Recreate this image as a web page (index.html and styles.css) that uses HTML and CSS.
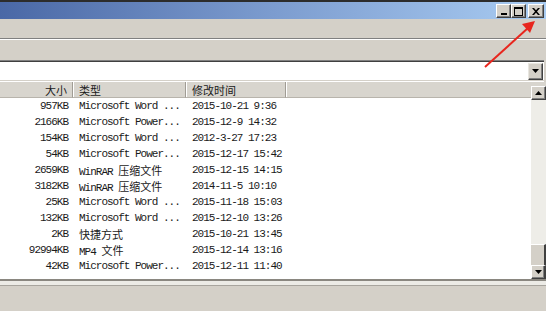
FILE: index.html
```html
<!DOCTYPE html>
<html>
<head>
<meta charset="utf-8">
<link rel="stylesheet" href="styles.css">
</head>
<body>
<div class="window">
  <div class="titlebar">
    <div class="tbtn min"><svg width="8" height="8" viewBox="0 0 8 8"><rect x="1" y="6" width="6" height="2" fill="#000"/></svg></div>
    <div class="tbtn max"><svg width="9" height="9" viewBox="0 0 9 9"><rect x="0.5" y="0.5" width="8" height="8" fill="none" stroke="#000"/><rect x="0" y="0" width="9" height="2" fill="#000"/></svg></div>
    <div class="tbtn close"><svg width="8" height="7" viewBox="0 0 8 7"><path d="M0 0h2l2 2.2 2-2.2h2l-3 3.5 3 3.5h-2l-2-2.2-2 2.2h-2l3-3.5z" fill="#000"/></svg></div>
  </div>
  <div class="menubar"></div>
  <div class="toolbar"></div>
  <div class="address">
    <div class="field">
      <div class="dropbtn"><svg width="7" height="4" viewBox="0 0 7 4"><path d="M0 0h7l-3.5 4z" fill="#000"/></svg></div>
    </div>
  </div>
  <div class="listview">
    <div class="list">
      <div class="row header">
        <div class="c size hc"><span class="cjk">大小</span></div>
        <div class="c type hc"><span class="cjk">类型</span></div>
        <div class="c date hc"><span class="cjk">修改时间</span></div>
        <div class="c rest hc"></div>
      </div>
      <div class="row"><div class="c size">957KB</div><div class="c type">Microsoft Word ...</div><div class="c date">2015-10-21 9:36</div></div>
      <div class="row"><div class="c size">2166KB</div><div class="c type">Microsoft Power...</div><div class="c date">2015-12-9 14:32</div></div>
      <div class="row"><div class="c size">154KB</div><div class="c type">Microsoft Word ...</div><div class="c date">2012-3-27 17:23</div></div>
      <div class="row"><div class="c size">54KB</div><div class="c type">Microsoft Power...</div><div class="c date">2015-12-17 15:42</div></div>
      <div class="row"><div class="c size">2659KB</div><div class="c type">WinRAR <span class="cjk">压缩文件</span></div><div class="c date">2015-12-15 14:15</div></div>
      <div class="row"><div class="c size">3182KB</div><div class="c type">WinRAR <span class="cjk">压缩文件</span></div><div class="c date">2014-11-5 10:10</div></div>
      <div class="row"><div class="c size">25KB</div><div class="c type">Microsoft Word ...</div><div class="c date">2015-11-18 15:03</div></div>
      <div class="row"><div class="c size">132KB</div><div class="c type">Microsoft Word ...</div><div class="c date">2015-12-10 13:26</div></div>
      <div class="row"><div class="c size">2KB</div><div class="c type"><span class="cjk">快捷方式</span></div><div class="c date">2015-10-21 13:45</div></div>
      <div class="row"><div class="c size">92994KB</div><div class="c type">MP4 <span class="cjk">文件</span></div><div class="c date">2015-12-14 13:16</div></div>
      <div class="row"><div class="c size">42KB</div><div class="c type">Microsoft Power...</div><div class="c date">2015-12-11 11:40</div></div>
    </div>
    <div class="vscroll">
      <div class="sbtn up"><svg width="7" height="4" viewBox="0 0 7 4"><path d="M0 4h7l-3.5-4z" fill="#000"/></svg></div>
      <div class="track"></div>
      <div class="thumb"></div>
      <div class="sbtn down"><svg width="7" height="4" viewBox="0 0 7 4"><path d="M0 0h7l-3.5 4z" fill="#000"/></svg></div>
    </div>
  </div>
  <div class="bottomedge"></div>
  <div class="statusbar"></div>
</div>
<svg class="arrow" width="546" height="311" viewBox="0 0 546 311">
  <line x1="485" y1="67" x2="528" y2="28" stroke="#e8261e" stroke-width="2"/>
  <polygon points="535,21 522,24 530,33" fill="#e8261e"/>
</svg>
</body>
</html>
```
FILE: styles.css
```css
html, body {
  margin: 0;
  padding: 0;
}
body {
  width: 546px;
  height: 311px;
  overflow: hidden;
  position: relative;
  background: #d4d0c8;
  font-family: "Liberation Mono", "Noto Sans CJK SC", monospace;
  font-size: 11px;
  color: #1a1a1a;
}
.window {
  display: flex;
  flex-direction: column;
  height: 311px;
}
.titlebar {
  height: 17px;
  border-top: 2px solid #2c2c2c;
  background: linear-gradient(to right, #4a68a6, #7c9ccf 50%, #a9ccf2);
  display: flex;
  justify-content: flex-end;
  align-items: flex-start;
  padding-top: 2px;
  padding-right: 2px;
  box-sizing: content-box;
  height: 15px;
}
.tbtn {
  width: 13px;
  height: 12px;
  background: #d4d0c8;
  border: 1px solid;
  border-color: #ffffff #404040 #404040 #ffffff;
  box-shadow: inset -1px -1px #808080;
  display: flex;
  align-items: center;
  justify-content: center;
}
.tbtn.close {
  margin-left: 2px;
  width: 14px;
}
.menubar {
  height: 19px;
  background: #d4d0c8;
  border-bottom: 1px solid #808080;
}
.toolbar {
  height: 20px;
  background: #d4d0c8;
  border-top: 1px solid #ffffff;
}
.address {
  height: 20px;
  margin-right: 2px;
  border-top: 1px solid #808080;
  border-bottom: 1px solid #ffffff;
}
.field {
  height: 18px;
  background: #ffffff;
  border-top: 1px solid #404040;
  border-bottom: 1px solid #d4d0c8;
  box-sizing: border-box;
  height: 20px;
  display: flex;
  justify-content: flex-end;
  align-items: center;
  padding-right: 1px;
}
.dropbtn {
  width: 13px;
  height: 15px;
  background: #d4d0c8;
  border: 1px solid;
  border-color: #e8e6e0 #404040 #404040 #e8e6e0;
  box-shadow: inset -1px -1px #808080;
  display: flex;
  align-items: center;
  justify-content: center;
}
.listview {
  height: 197px;
  display: flex;
}
.list {
  flex: 1;
  background: #ffffff;
}
.row {
  display: flex;
  height: 16px;
  line-height: 16px;
  letter-spacing: -1px;
  white-space: nowrap;
}
.row.header {
  background: #d8d5ce;
  height: 16px;
}
.c {
  box-sizing: border-box;
  overflow: hidden;
}
.size {
  width: 73px;
  text-align: right;
  padding-right: 5px;
}
.type {
  width: 113px;
  padding-left: 6px;
}
.date {
  width: 100px;
  padding-left: 6px;
}
.rest {
  flex: 1;
}
.hc {
  border-right: 1px solid #a09c94;
  box-shadow: 1px 0 0 #ffffff;
  border-bottom: 1px solid #b8b4ac;
}
.hc.rest {
  border-right: none;
  box-shadow: none;
}
.cjk {
  font-family: "Noto Sans CJK SC", sans-serif;
  letter-spacing: 0;
  font-size: 11px;
}
.vscroll {
  width: 15px;
  display: flex;
  flex-direction: column;
  background: #d8d5ce;
}
.sbtn {
  height: 12px;
  background: #d4d0c8;
  border: 1px solid;
  border-color: #ffffff #404040 #404040 #ffffff;
  box-shadow: inset -1px -1px #808080;
  display: flex;
  align-items: center;
  justify-content: center;
}
.sbtn.up {
  margin-top: 4px;
}
.track {
  flex: 1;
  background: #eeede8;
}
.thumb {
  height: 20px;
  background: #d4d0c8;
  border-right: 2px solid #404040;
  border-top: 1px solid #ffffff;
}
.sbtn.down {
  border-right: 2px solid #404040;
}
.bottomedge {
  height: 4px;
  border-top: 2px solid #8a8780;
  border-bottom: 1px solid #a8a59e;
  background: #ecebe6;
}
.statusbar {
  flex: 1;
  background: #d4d0c8;
}
.arrow {
  position: absolute;
  left: 0;
  top: 0;
  pointer-events: none;
}
```
